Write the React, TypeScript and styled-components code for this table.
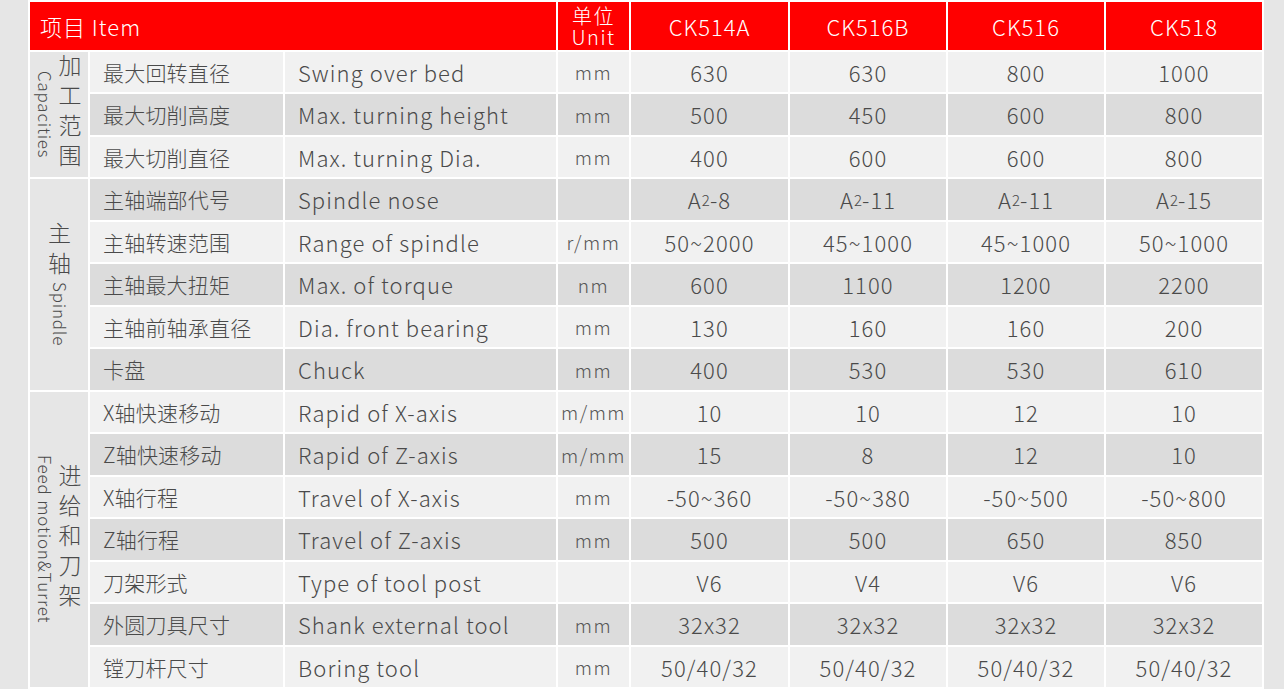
import React from "react";
import styled, { createGlobalStyle } from "styled-components";

const Global = createGlobalStyle`
  html, body { margin: 0; padding: 0; background: #e6e6e6; }
  body { font-family: "Noto Sans CJK SC", "Noto Sans", sans-serif; font-weight: 300; }
`;

const Page = styled.div`
  padding-left: 28px;
  width: 1284px;
  height: 689px;
  overflow: hidden;
  box-sizing: border-box;
`;

const Grid = styled.div`
  display: grid;
  width: 1236px;
  box-sizing: border-box;
  padding: 2px;
  gap: 2px;
  background: #ffffff;
  grid-template-columns: 58px 193px 271px 71px 157px 156px 156px 156px;
  grid-template-rows: 47.5px repeat(15, 40.5px);
`;

const HeadCell = styled.div<{ $span?: number; $align?: string; $pl?: number }>`
  grid-column: ${(p) => (p.$span ? `span ${p.$span}` : "auto")};
  background: #ff0000;
  color: #ffffff;
  display: flex;
  align-items: center;
  justify-content: ${(p) => p.$align || "center"};
  padding-left: ${(p) => p.$pl || 0}px;
  font-size: 22px;
  letter-spacing: 1px;
  white-space: nowrap;
`;

const UnitHead = styled.div`
  background: #ff0000;
  color: #ffffff;
  display: flex;
  flex-direction: column;
  align-items: center;
  justify-content: center;
  font-size: 20px;
  line-height: 21px;
  letter-spacing: 1.5px;
`;

const UnitLine = styled.span`
  display: block;
  height: 21px;
`;

const CatCell = styled.div<{ $rows: number }>`
  grid-column: 1;
  grid-row: span ${(p) => p.$rows};
  background: #e6e6e6;
  color: #4a4a4a;
  display: flex;
  align-items: center;
  justify-content: center;
  gap: 4px;
`;

const Vertical = styled.div`
  writing-mode: vertical-rl;
  white-space: nowrap;
  line-height: 1;
`;

const VZh = styled.span`
  font-size: 23px;
  letter-spacing: 7px;
`;

const VEn = styled.span`
  font-size: 17px;
  letter-spacing: 0.8px;
`;

const Cell = styled.div<{ $alt: boolean; $col?: number; $align?: string; $pl?: number }>`
  grid-column: ${(p) => p.$col ?? "auto"};
  background: ${(p) => (p.$alt ? "#dcdcdc" : "#f1f1f1")};
  color: #4a4a4a;
  display: flex;
  align-items: center;
  justify-content: ${(p) => p.$align || "center"};
  padding-left: ${(p) => p.$pl || 0}px;
  font-size: 22px;
  letter-spacing: 1.1px;
  font-variant-numeric: tabular-nums;
  white-space: nowrap;
`;

const ZhCell = styled(Cell)`
  font-size: 21px;
  letter-spacing: 0.2px;
`;

const UnitCell = styled(Cell)`
  font-size: 19px;
  letter-spacing: 1.5px;
  color: #555555;
`;

const Sub = styled.span`
  font-size: 15px;
  letter-spacing: 0;
`;

type Row = [string, string, string, string[]];

const groups: { rows: Row[]; label: React.ReactNode }[] = [
  {
    label: (
      <>
        <Vertical>
          <VEn>Capacities</VEn>
        </Vertical>
        <Vertical>
          <VZh>加工范围</VZh>
        </Vertical>
      </>
    ),
    rows: [
      ["最大回转直径", "Swing over bed", "mm", ["630", "630", "800", "1000"]],
      ["最大切削高度", "Max. turning height", "mm", ["500", "450", "600", "800"]],
      ["最大切削直径", "Max. turning Dia.", "mm", ["400", "600", "600", "800"]],
    ],
  },
  {
    label: (
      <Vertical>
        <VZh>主轴</VZh>
        <VEn>Spindle</VEn>
      </Vertical>
    ),
    rows: [
      ["主轴端部代号", "Spindle nose", "", ["A2-8", "A2-11", "A2-11", "A2-15"]],
      ["主轴转速范围", "Range of spindle", "r/mm", ["50~2000", "45~1000", "45~1000", "50~1000"]],
      ["主轴最大扭矩", "Max. of torque", "nm", ["600", "1100", "1200", "2200"]],
      ["主轴前轴承直径", "Dia. front bearing", "mm", ["130", "160", "160", "200"]],
      ["卡盘", "Chuck", "mm", ["400", "530", "530", "610"]],
    ],
  },
  {
    label: (
      <>
        <Vertical>
          <VEn>Feed motion&amp;Turret</VEn>
        </Vertical>
        <Vertical>
          <VZh>进给和刀架</VZh>
        </Vertical>
      </>
    ),
    rows: [
      ["X轴快速移动", "Rapid of X-axis", "m/mm", ["10", "10", "12", "10"]],
      ["Z轴快速移动", "Rapid of Z-axis", "m/mm", ["15", "8", "12", "10"]],
      ["X轴行程", "Travel of X-axis", "mm", ["-50~360", "-50~380", "-50~500", "-50~800"]],
      ["Z轴行程", "Travel of Z-axis", "mm", ["500", "500", "650", "850"]],
      ["刀架形式", "Type of tool post", "", ["V6", "V4", "V6", "V6"]],
      ["外圆刀具尺寸", "Shank external tool", "mm", ["32x32", "32x32", "32x32", "32x32"]],
      ["镗刀杆尺寸", "Boring tool", "mm", ["50/40/32", "50/40/32", "50/40/32", "50/40/32"]],
    ],
  },
];

const models = ["CK514A", "CK516B", "CK516", "CK518"];

function renderValue(v: string) {
  if (v.startsWith("A2-")) {
    return (
      <>
        A<Sub>2</Sub>
        {v.slice(2)}
      </>
    );
  }
  return v;
}

export default function App() {
  let idx = 0;
  return (
    <Page>
      <Global />
      <Grid>
        <HeadCell $span={3} $align="flex-start" $pl={10}>
          项目 Item
        </HeadCell>
        <UnitHead>
          <UnitLine>单位</UnitLine>
          <UnitLine>Unit</UnitLine>
        </UnitHead>
        {models.map((m) => (
          <HeadCell key={m}>{m}</HeadCell>
        ))}
        {groups.map((g, gi) => (
          <React.Fragment key={gi}>
            {g.rows.map((r, ri) => {
              const alt = idx % 2 === 1;
              idx++;
              return (
                <React.Fragment key={ri}>
                  {ri === 0 && <CatCell $rows={g.rows.length}>{g.label}</CatCell>}
                  <ZhCell $alt={alt} $col={2} $align="flex-start" $pl={13}>
                    {r[0]}
                  </ZhCell>
                  <Cell $alt={alt} $align="flex-start" $pl={13}>
                    {r[1]}
                  </Cell>
                  <UnitCell $alt={alt}>{r[2]}</UnitCell>
                  {r[3].map((v, vi) => (
                    <Cell key={vi} $alt={alt}>
                      {renderValue(v)}
                    </Cell>
                  ))}
                </React.Fragment>
              );
            })}
          </React.Fragment>
        ))}
      </Grid>
    </Page>
  );
}
